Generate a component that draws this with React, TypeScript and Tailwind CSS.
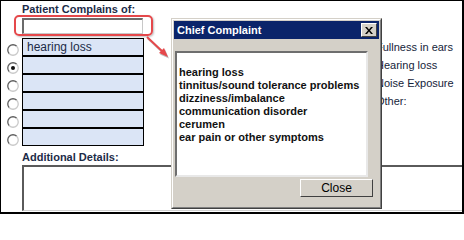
import React from 'react';

const complaints = [
  'hearing loss',
  'tinnitus/sound tolerance problems',
  'dizziness/imbalance',
  'communication disorder',
  'cerumen',
  'ear pain or other symptoms',
];

const cells = ['hearing loss', '', '', '', '', ''];
const sideLabels = ['Fullness in ears', 'Hearing loss', 'Noise Exposure', 'Other:'];

function Radio({ checked }: { checked?: boolean }) {
  return (
    <svg width="12" height="12" viewBox="0 0 12 12" className="shrink-0">
      <circle cx="6" cy="6" r="5" fill="#fff" />
      <path d="M2.3 9.7 A5.2 5.2 0 0 1 9.7 2.3" fill="none" stroke="#5e5e5e" strokeWidth="1.3" />
      <path d="M9.7 2.3 A5.2 5.2 0 0 1 2.3 9.7" fill="none" stroke="#c9c9c9" strokeWidth="1.3" />
      {checked && <circle cx="6" cy="6" r="2" fill="#111" />}
    </svg>
  );
}

export default function App() {
  return (
    <div className="relative w-[464px] h-[215px] bg-white overflow-hidden font-['Liberation_Sans',Arial,sans-serif]">
      <div className="w-[464px] h-[214px] border-l border-t border-r-2 border-b-2 border-black flex flex-col">
        <div className="pl-[21px] pt-[2px] h-[16px] text-[11px] leading-[13px] font-bold text-[#1c2b48]">
          Patient Complains of:
        </div>

        <div className="flex">
          <div className="flex flex-col">
            <div className="ml-[21px] mt-[1px] w-[121px] h-[16px] border-t-2 border-l-2 border-r border-b border-t-[#6b6b6b] border-l-[#6b6b6b] border-r-[#c8c8c8] border-b-[#c8c8c8] bg-white" />
            <div className="mt-[4px] flex flex-col">
              {cells.map((text, i) => (
                <div key={i} className="flex items-center h-[18px]">
                  <div className="w-[21px] flex justify-end pr-[3px] pt-[5px]">
                    <Radio checked={i === 1} />
                  </div>
                  <div className="w-[122px] h-[18px] border border-black bg-[#dbe5f6] pl-[4px] text-[12px] leading-[16px] text-[#1c2b48]">
                    {text}
                  </div>
                </div>
              ))}
            </div>
          </div>
          <div className="ml-[232px] pt-[21px] flex flex-col text-[11px] leading-[18px] text-[#15233a]">
            {sideLabels.map((l) => (
              <div key={l}>{l}</div>
            ))}
          </div>
        </div>

        <div className="pl-[21px] mt-[5px] h-[13px] text-[11px] leading-[13px] font-bold text-[#1c2b48]">
          Additional Details:
        </div>
        <div className="ml-[21px] mt-[1px] h-[46px] border-t-2 border-l-2 border-b border-t-[#5a5a5a] border-l-[#5a5a5a] border-b-[#d0d0d0] bg-white" />
      </div>

      {/* highlight round the input */}
      <div className="absolute left-[14px] top-[15px] w-[139px] h-[21px] rounded-[5px] border-2 border-[#e5484b] shadow-[1px_1px_2px_rgba(0,0,0,0.25)]" />

      {/* arrow */}
      <svg className="absolute left-[140px] top-[30px]" width="40" height="35" viewBox="0 0 40 35">
        <g transform="translate(1 1.5)" opacity="0.25">
          <line x1="7" y1="7" x2="23" y2="22" stroke="#000" strokeWidth="2" />
          <polygon points="28,27 19,23 24,18" fill="#000" />
        </g>
        <line x1="7" y1="7" x2="23" y2="22" stroke="#e5484b" strokeWidth="2" />
        <polygon points="28,27 19,23 24,18" fill="#e5484b" />
      </svg>

      {/* dialog */}
      <div className="absolute left-[171px] top-[18px] w-[211px] h-[191px] bg-[#d4d0c8] border border-t-[#d4d0c8] border-l-[#d4d0c8] border-r-[#404040] border-b-[#404040]">
        <div className="w-full h-full border border-t-white border-l-white border-r-[#808080] border-b-[#808080] p-[1px] flex flex-col">
          <div className="h-[18px] bg-[#0a246a] flex items-center justify-between pl-[3px] pr-[2px]">
            <span className="text-white text-[11px] font-bold leading-[13px]">
              Chief Complaint
            </span>
            <div className="w-[16px] h-[14px] bg-[#d4d0c8] border border-t-white border-l-white border-r-[#404040] border-b-[#404040] flex items-center justify-center">
              <svg width="8" height="7" viewBox="0 0 8 7">
                <path d="M0 0 L2 0 L4 2.5 L6 0 L8 0 L5 3.5 L8 7 L6 7 L4 4.5 L2 7 L0 7 L3 3.5 Z" fill="#000" />
              </svg>
            </div>
          </div>
          <div className="ml-[1px] mt-[12px] w-[193px] h-[126px] bg-white border-2 border-t-[#6e6e6e] border-l-[#6e6e6e] border-r-[#e8e8e8] border-b-[#e8e8e8] pl-[2px] pt-[13px]">
            {complaints.map((c) => (
              <div key={c} className="text-[11px] leading-[13px] font-bold text-[#111] whitespace-nowrap">
                {c}
              </div>
            ))}
          </div>
          <div className="flex justify-end pr-[6px] mt-[2px]">
            <button className="w-[73px] h-[18px] bg-[#d4d0c8] border border-t-white border-l-white border-r-[#404040] border-b-[#404040] text-[12px] leading-[14px] text-black">
              Close
            </button>
          </div>
        </div>
      </div>
    </div>
  );
}
